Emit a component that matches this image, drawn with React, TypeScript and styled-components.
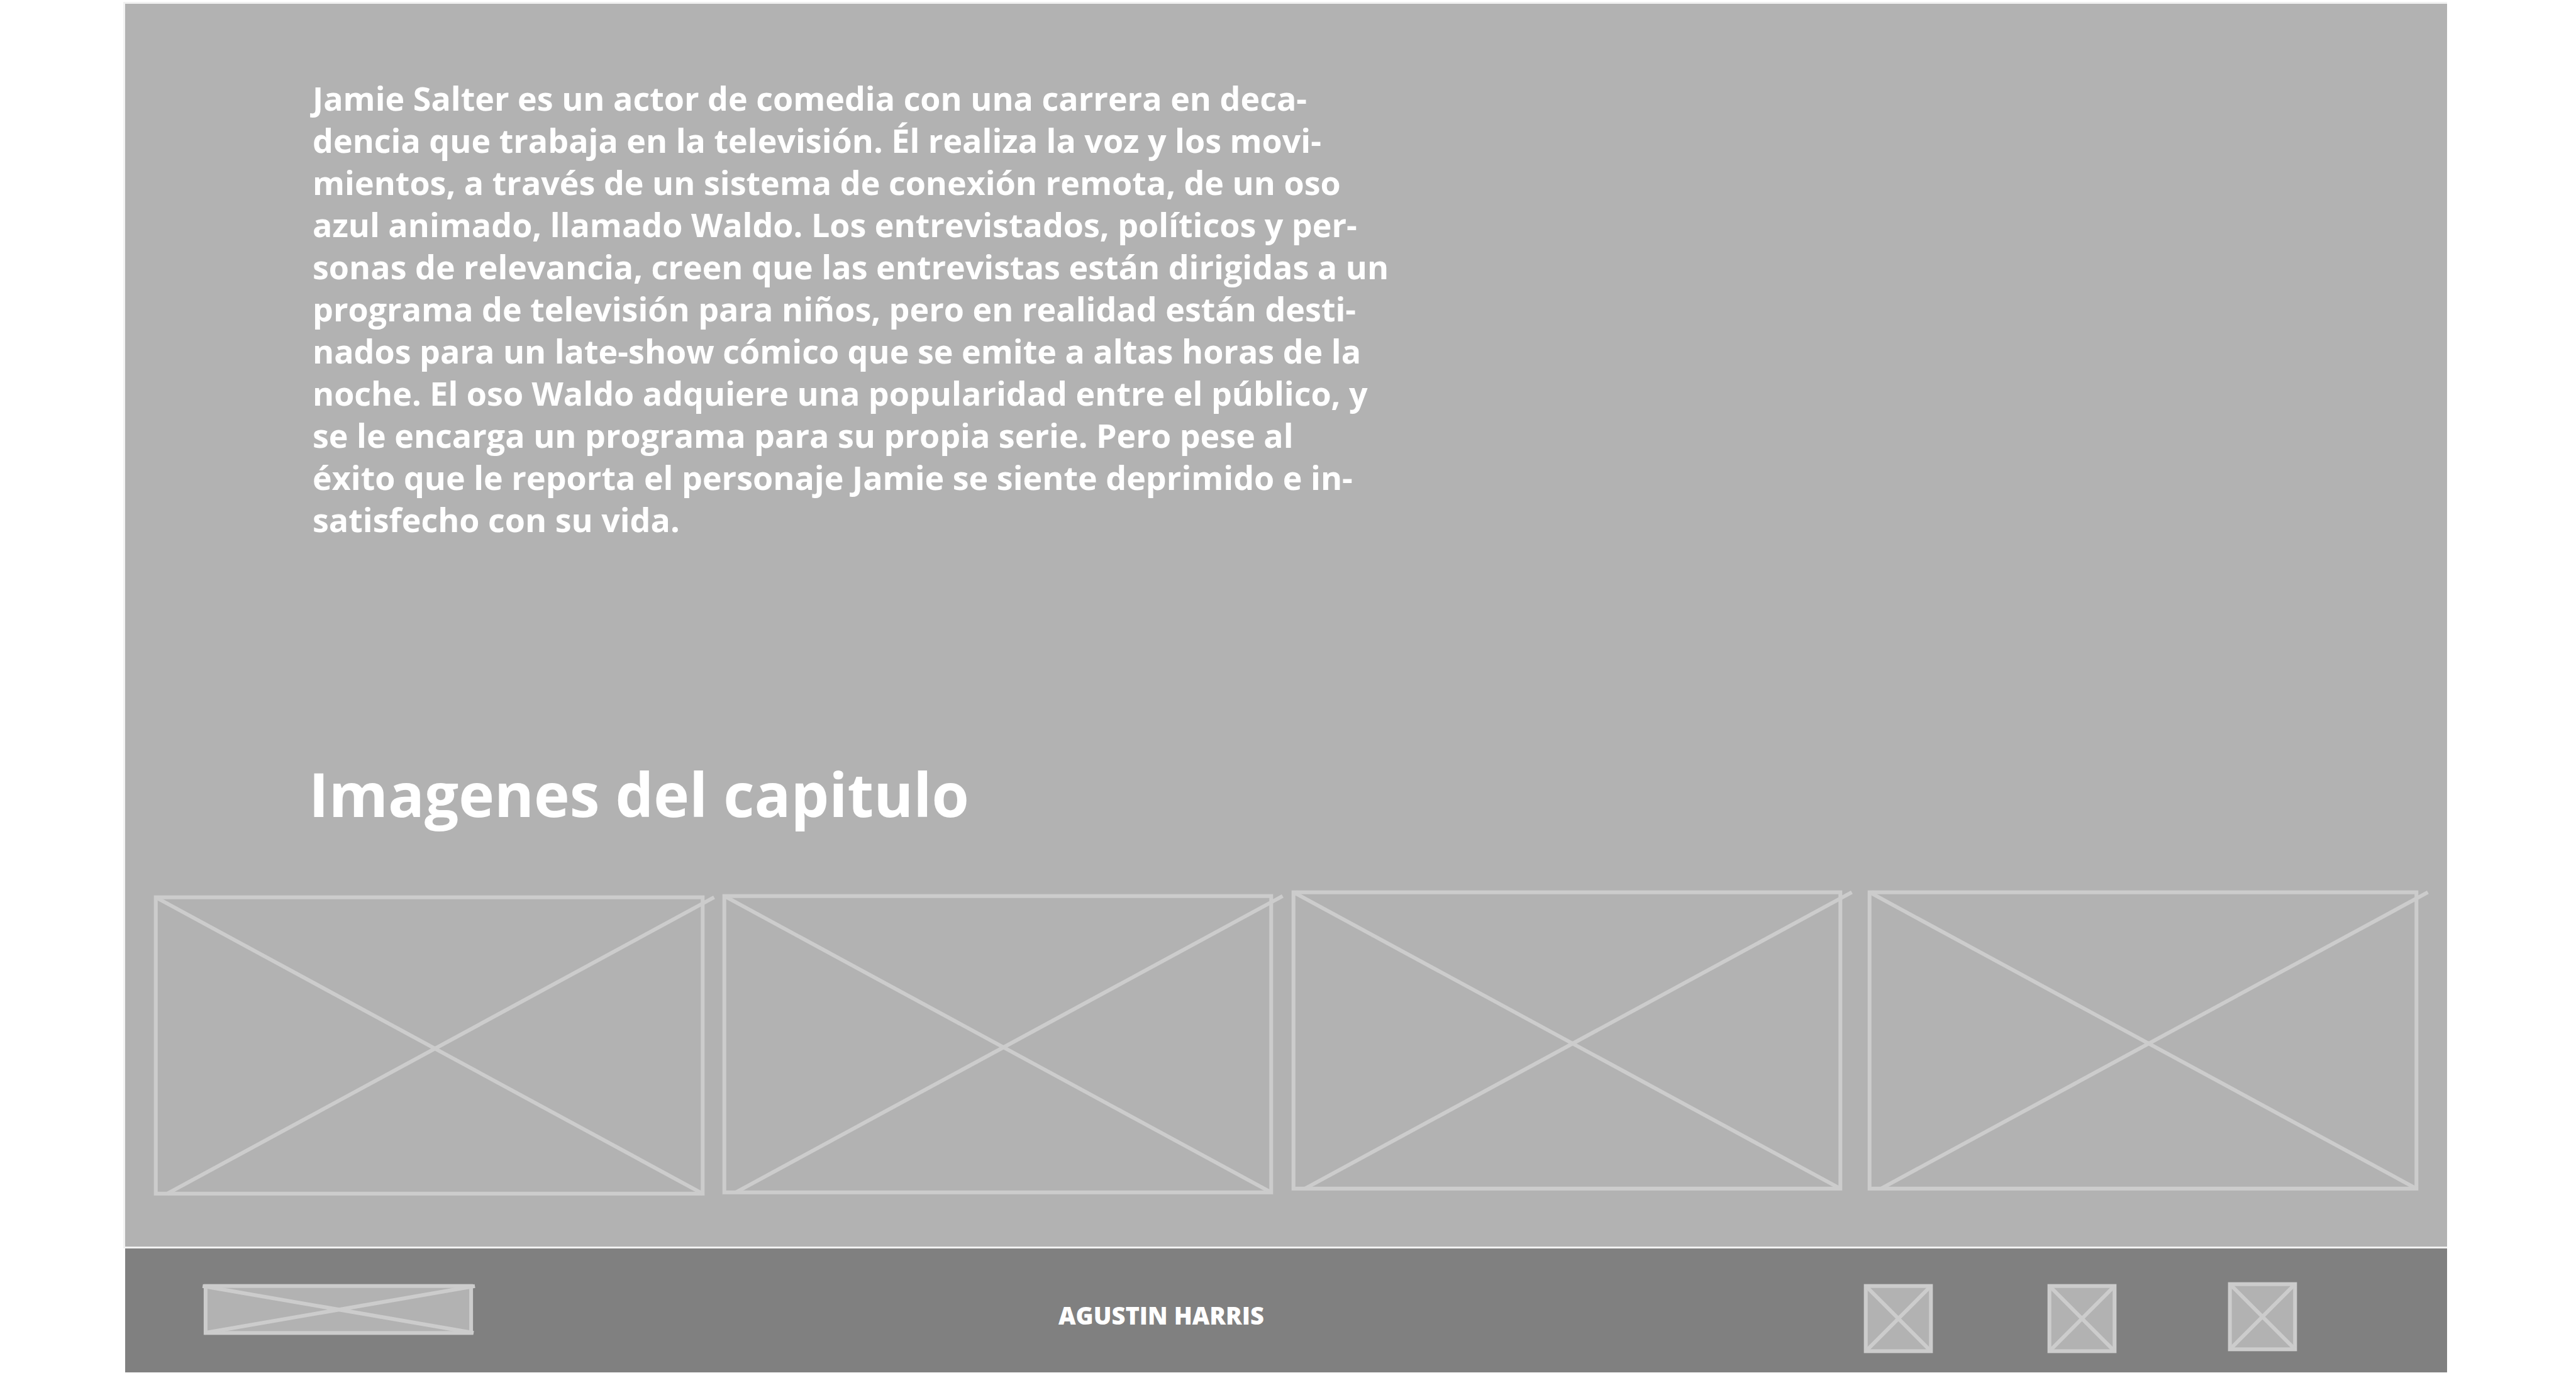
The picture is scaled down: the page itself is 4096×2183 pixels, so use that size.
import React from "react";
import styled, { createGlobalStyle } from "styled-components";

const color = {
  page: "#ffffff",
  panel: "#b2b2b2",
  footer: "#808080",
  edge: "#f2f2f2",
  stroke: "#cccccc",
  text: "#ffffff",
};

const GlobalStyle = createGlobalStyle`
  *, *::before, *::after { box-sizing: border-box; }
  body {
    margin: 0;
    background: ${color.page};
    color: ${color.text};
    font-family: "Open Sans", "Noto Sans", sans-serif;
    font-weight: 700;
  }
`;

const Page = styled.div`
  display: flex;
  flex-direction: column;
  min-height: 100vh;
  padding: 3px 205px 1px 196px;
`;

const Panel = styled.main`
  flex: 1;
  border: solid ${color.edge};
  border-width: 3px 0 3px 3px;
  background: ${color.panel};
  padding: 116px 46px 0;
`;

const Synopsis = styled.p`
  margin: 0 0 344px;
  padding-left: 252px;
  font-size: 52px;
  line-height: 67px;
`;

const Line = styled.span`
  display: block;
  white-space: nowrap;
`;

const Heading = styled.h1`
  margin: 0 0 95px;
  padding-left: 246px;
  font-size: 96px;
  font-weight: inherit;
  line-height: 118px;
`;

const Gallery = styled.div`
  display: grid;
  grid-template-columns: 904fr 905fr 916fr 875fr;
  align-items: start;
`;

const Placeholder = styled.svg`
  display: block;
  overflow: visible;
  fill: ${color.panel};
  stroke: ${color.stroke};
  stroke-width: 9;
`;

const Tile = styled(Placeholder)<{ $drop: number }>`
  width: 875px;
  max-width: 100%;
  height: auto;
  margin-top: ${(p) => p.$drop}px;
  fill: none;
`;

const Footer = styled.footer`
  display: grid;
  grid-template-columns: 1484fr 1281fr 927fr;
  align-items: start;
  height: 197px;
  margin-left: 3px;
  padding-top: 54px;
  background: ${color.footer};
`;

const Logo = styled(Placeholder)`
  width: 428px;
  height: 80px;
  margin: 3px 0 0 125px;
`;

const Author = styled.span`
  padding-top: 31px;
  font-size: 38px;
  font-weight: 800;
  line-height: 42px;
  white-space: nowrap;
`;

const Socials = styled.nav`
  display: grid;
  grid-template-columns: 292fr 287fr 348fr;
  align-items: start;
`;

const Social = styled.a<{ $drop: number }>`
  display: block;
  width: 109px;
  margin-top: ${(p) => p.$drop}px;
`;

const SocialIcon = styled(Placeholder)`
  width: 109px;
  height: 109px;
`;

const synopsis = [
  "Jamie Salter es un actor de comedia con una carrera en deca-",
  "dencia que trabaja en la televisión. Él realiza la voz y los movi-",
  "mientos, a través de un sistema de conexión remota, de un oso",
  "azul animado, llamado Waldo. Los entrevistados, políticos y per-",
  "sonas de relevancia, creen que las entrevistas están dirigidas a un",
  "programa de televisión para niños, pero en realidad están desti-",
  "nados para un late-show cómico que se emite a altas horas de la",
  "noche. El oso Waldo adquiere una popularidad entre el público, y",
  "se le encarga un programa para su propia serie. Pero pese al",
  "éxito que le reporta el personaje Jamie se siente deprimido e in-",
  "satisfecho con su vida.",
];

const tileDrops = [8, 6, 0, 0];
const socialDrops = [3, 3, 0];

export default function App() {
  return (
    <>
      <GlobalStyle />
      <Page>
        <Panel>
          <Synopsis>
            {synopsis.map((line) => (
              <Line key={line}>{line}</Line>
            ))}
          </Synopsis>
          <Heading>Imagenes del capitulo</Heading>
          <Gallery>
            {tileDrops.map((drop, i) => (
              <Tile key={i} $drop={drop} viewBox="0 0 1300 708" aria-hidden="true">
                <rect x="4" y="4" width="1292" height="700" />
                <path d="M4 4L1296 704M31 704L1323 4" />
              </Tile>
            ))}
          </Gallery>
        </Panel>
        <Footer>
          <Logo viewBox="0 0 636 119" aria-hidden="true">
            <rect x="4" y="4" width="628" height="111" />
            <path d="M-3 4L638 115M2 115L641 4" />
          </Logo>
          <Author>AGUSTIN HARRIS</Author>
          <Socials>
            {socialDrops.map((drop, i) => (
              <Social key={i} href="#" $drop={drop}>
                <SocialIcon viewBox="0 0 162 162" aria-hidden="true">
                  <rect x="4" y="4" width="154" height="154" />
                  <path d="M4 4L158 158M158 4L4 158" />
                </SocialIcon>
              </Social>
            ))}
          </Socials>
        </Footer>
      </Page>
    </>
  );
}
